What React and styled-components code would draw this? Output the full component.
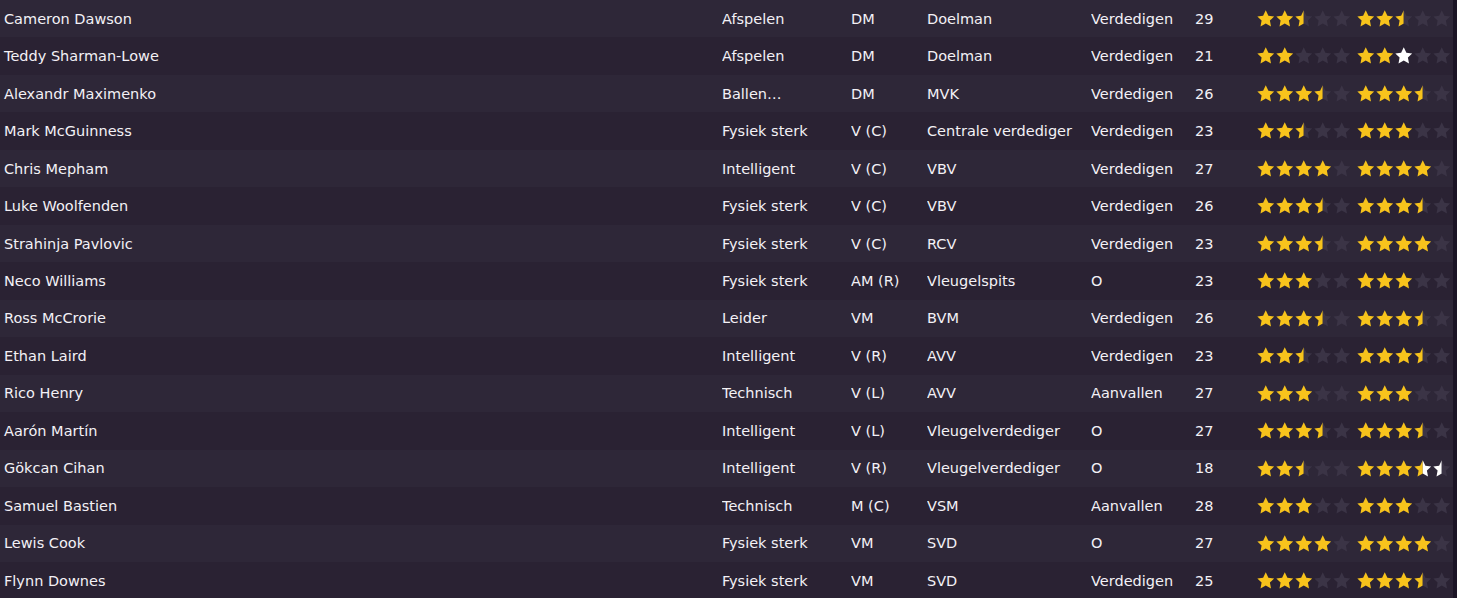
import React from 'react';
import styled, { createGlobalStyle } from 'styled-components';

const players = [
  ['Cameron Dawson', 'Afspelen', 'DM', 'Doelman', 'Verdedigen', 29, 2.5, 2.5, 0],
  ['Teddy Sharman-Lowe', 'Afspelen', 'DM', 'Doelman', 'Verdedigen', 21, 2, 2, 3],
  ['Alexandr Maximenko', 'Ballen…', 'DM', 'MVK', 'Verdedigen', 26, 3.5, 3.5, 0],
  ['Mark McGuinness', 'Fysiek sterk', 'V (C)', 'Centrale verdediger', 'Verdedigen', 23, 2.5, 3, 0],
  ['Chris Mepham', 'Intelligent', 'V (C)', 'VBV', 'Verdedigen', 27, 4, 4, 0],
  ['Luke Woolfenden', 'Fysiek sterk', 'V (C)', 'VBV', 'Verdedigen', 26, 3.5, 3.5, 0],
  ['Strahinja Pavlovic', 'Fysiek sterk', 'V (C)', 'RCV', 'Verdedigen', 23, 3.5, 4, 0],
  ['Neco Williams', 'Fysiek sterk', 'AM (R)', 'Vleugelspits', 'O', 23, 3, 3, 0],
  ['Ross McCrorie', 'Leider', 'VM', 'BVM', 'Verdedigen', 26, 3.5, 3.5, 0],
  ['Ethan Laird', 'Intelligent', 'V (R)', 'AVV', 'Verdedigen', 23, 2.5, 3.5, 0],
  ['Rico Henry', 'Technisch', 'V (L)', 'AVV', 'Aanvallen', 27, 3, 3, 0],
  ['Aarón Martín', 'Intelligent', 'V (L)', 'Vleugelverdediger', 'O', 27, 3.5, 3.5, 0],
  ['Gökcan Cihan', 'Intelligent', 'V (R)', 'Vleugelverdediger', 'O', 18, 2.5, 3.5, 4.5],
  ['Samuel Bastien', 'Technisch', 'M (C)', 'VSM', 'Aanvallen', 28, 3, 3, 0],
  ['Lewis Cook', 'Fysiek sterk', 'VM', 'SVD', 'O', 27, 4, 4, 0],
  ['Flynn Downes', 'Fysiek sterk', 'VM', 'SVD', 'Verdedigen', 25, 3, 3.5, 0],
];

const GOLD = '#f7c31c';
const WHITE = '#ffffff';
const EMPTY = '#3b3446';

// star drawn in two halves so a rating can stop half way
const FULL = '8,0.3 10.4,5.2 15.7,5.9 11.8,9.6 12.8,15 8,12.4 3.2,15 4.2,9.6 0.3,5.9 5.6,5.2';
const LEFT = '8,0.3 8,12.4 3.2,15 4.2,9.6 0.3,5.9 5.6,5.2';
const RIGHT = '8,0.3 10.4,5.2 15.7,5.9 11.8,9.6 12.8,15 8,12.4';

const colourAt = (half, gold, white) => {
  if (half <= gold * 2) return GOLD;
  if (half <= white * 2) return WHITE;
  return EMPTY;
};

const Star = ({ index, gold, white }) => {
  const left = colourAt(index * 2 + 1, gold, white);
  const right = colourAt(index * 2 + 2, gold, white);
  return (
    <StarSvg viewBox="0 0 16 16">
      {left === right ? (
        <polygon points={FULL} fill={left} />
      ) : (
        <>
          <polygon points={LEFT} fill={left} />
          <polygon points={RIGHT} fill={right} />
        </>
      )}
    </StarSvg>
  );
};

const Stars = ({ gold, white = 0 }) => (
  <StarRow>
    {[0, 1, 2, 3, 4].map((i) => (
      <Star key={i} index={i} gold={gold} white={white} />
    ))}
  </StarRow>
);

const App = () => (
  <>
    <GlobalStyle />
    <Page>
      <Table>
        {players.map(([name, trait, pos, role, duty, age, ca, pa, paWhite], i) => (
          <Row key={name} $odd={i % 2 === 1}>
            <Cell $pl={4}>{name}</Cell>
            <Cell>{trait}</Cell>
            <Cell>{pos}</Cell>
            <Cell>{role}</Cell>
            <Cell>{duty}</Cell>
            <Cell>{age}</Cell>
            <Stars gold={ca} />
            <Stars gold={pa} white={paWhite} />
          </Row>
        ))}
      </Table>
      <Scroll />
    </Page>
  </>
);

const GlobalStyle = createGlobalStyle`
  html, body {
    margin: 0;
    padding: 0;
    background: #2a2233;
    overflow: hidden;
  }
  body {
    font-family: "DejaVu Sans", "Noto Sans", sans-serif;
  }
`;

const Page = styled.div`
  display: flex;
  width: 1457px;
  height: 598px;
  overflow: hidden;
`;

const Table = styled.div`
  flex: 1;
  display: flex;
  flex-direction: column;
`;

const Scroll = styled.div`
  width: 4px;
  background: #1b1425;
`;

const Row = styled.div`
  display: grid;
  grid-template-columns: 722px 129px 76px 164px 104px 62px 100px 96px;
  align-items: center;
  height: 37.47px;
  flex-shrink: 0;
  background: ${(p) => (p.$odd ? '#2a2233' : '#2e2738')};
`;

const Cell = styled.div`
  padding-left: ${(p) => p.$pl || 0}px;
  color: #f3f1f6;
  font-size: 14.5px;
  white-space: nowrap;
  overflow: hidden;
`;

const StarRow = styled.div`
  display: flex;
  gap: 1.5px;
`;

const StarSvg = styled.svg`
  width: 17.5px;
  height: 17.5px;
  display: block;
`;

export default App;
